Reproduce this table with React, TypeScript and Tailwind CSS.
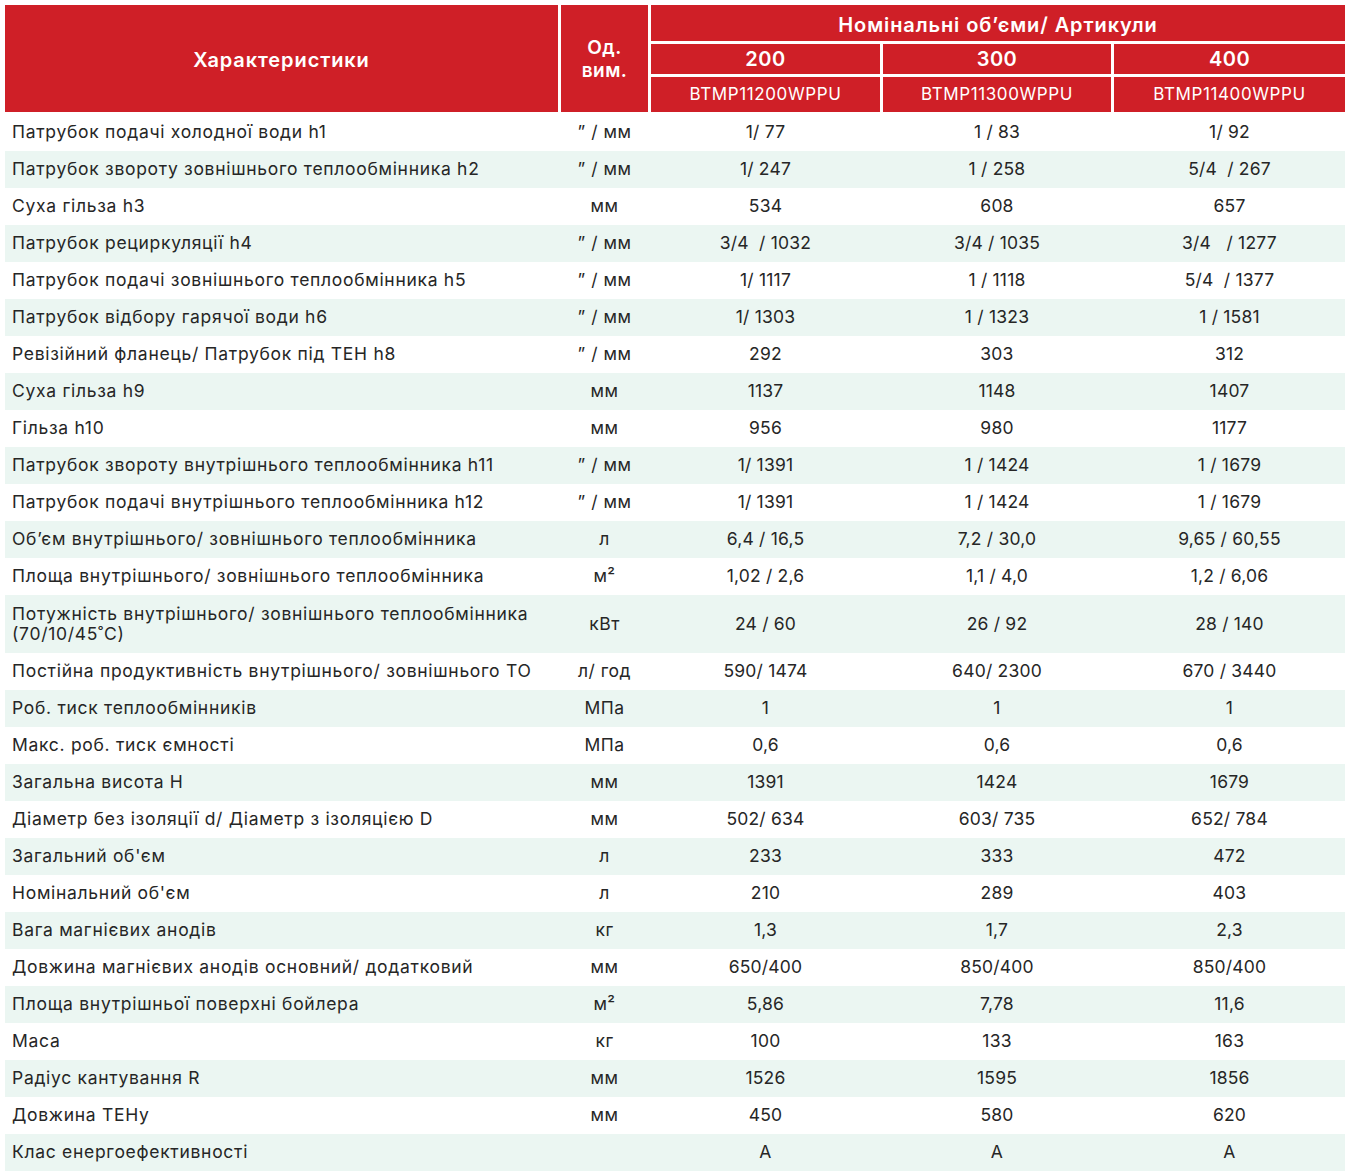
import React from "react";

type Row = { name: React.ReactNode; unit: string; v: [string, string, string]; tall?: boolean };

const rows: Row[] = [
  { name: "Патрубок подачі холодної води h1", unit: "\u201D / мм", v: ["1/ 77", "1 / 83", "1/ 92"] },
  { name: "Патрубок звороту зовнішнього теплообмінника h2", unit: "\u201D / мм", v: ["1/ 247", "1 / 258", "5/4  / 267"] },
  { name: "Суха гільза h3", unit: "мм", v: ["534", "608", "657"] },
  { name: "Патрубок рециркуляції h4", unit: "\u201D / мм", v: ["3/4  / 1032", "3/4 / 1035", "3/4   / 1277"] },
  { name: "Патрубок подачі зовнішнього теплообмінника h5", unit: "\u201D / мм", v: ["1/ 1117", "1 / 1118", "5/4  / 1377"] },
  { name: "Патрубок відбору гарячої води h6", unit: "\u201D / мм", v: ["1/ 1303", "1 / 1323", "1 / 1581"] },
  { name: "Ревізійний фланець/ Патрубок під ТЕН h8", unit: "\u201D / мм", v: ["292", "303", "312"] },
  { name: "Суха гільза h9", unit: "мм", v: ["1137", "1148", "1407"] },
  { name: "Гільза h10", unit: "мм", v: ["956", "980", "1177"] },
  { name: "Патрубок звороту внутрішнього теплообмінника h11", unit: "\u201D / мм", v: ["1/ 1391", "1 / 1424", "1 / 1679"] },
  { name: "Патрубок подачі внутрішнього теплообмінника h12", unit: "\u201D / мм", v: ["1/ 1391", "1 / 1424", "1 / 1679"] },
  { name: "Об\u2019єм внутрішнього/ зовнішнього теплообмінника", unit: "л", v: ["6,4 / 16,5", "7,2 / 30,0", "9,65 / 60,55"] },
  { name: "Площа внутрішнього/ зовнішнього теплообмінника", unit: "м²", v: ["1,02 / 2,6", "1,1 / 4,0", "1,2 / 6,06"] },
  {
    name: (
      <>
        Потужність внутрішнього/ зовнішнього теплообмінника
        <br />
        (70/10/45˚C)
      </>
    ),
    unit: "кВт",
    v: ["24 / 60", "26 / 92", "28 / 140"],
    tall: true,
  },
  { name: "Постійна продуктивність внутрішнього/ зовнішнього ТО", unit: "л/ год", v: ["590/ 1474", "640/ 2300", "670 / 3440"] },
  { name: "Роб. тиск теплообмінників", unit: "МПа", v: ["1", "1", "1"] },
  { name: "Макс. роб. тиск ємності", unit: "МПа", v: ["0,6", "0,6", "0,6"] },
  { name: "Загальна висота H", unit: "мм", v: ["1391", "1424", "1679"] },
  { name: "Діаметр без ізоляції d/ Діаметр з ізоляцією D", unit: "мм", v: ["502/ 634", "603/ 735", "652/ 784"] },
  { name: "Загальний об'єм", unit: "л", v: ["233", "333", "472"] },
  { name: "Номінальний об'єм", unit: "л", v: ["210", "289", "403"] },
  { name: "Вага магнієвих анодів", unit: "кг", v: ["1,3", "1,7", "2,3"] },
  { name: "Довжина магнієвих анодів основний/ додатковий", unit: "мм", v: ["650/400", "850/400", "850/400"] },
  { name: "Площа внутрішньої поверхні бойлера", unit: "м²", v: ["5,86", "7,78", "11,6"] },
  { name: "Маса", unit: "кг", v: ["100", "133", "163"] },
  { name: "Радіус кантування R", unit: "мм", v: ["1526", "1595", "1856"] },
  { name: "Довжина ТЕНу", unit: "мм", v: ["450", "580", "620"] },
  { name: "Клас енергоефективності", unit: "", v: ["A", "A", "A"] },
];

const cols = "grid grid-cols-[553px_87px_229px_228px_231px] gap-x-[3px]";

export default function App() {
  return (
    <div
      className="w-[1350px] min-h-[1174px] bg-white pt-[5px] pl-[5px] text-[#262626]"
      style={{ fontFamily: "Inter, 'Noto Sans', sans-serif" }}
    >
      {/* Header */}
      <div className={`${cols} grid-rows-[36px_30px_35px] gap-y-[3px] text-white`}>
        <div className="row-span-3 bg-[#cf1f27] flex items-center justify-center pt-[2px] text-[20px] tracking-[0.9px] font-semibold">
          Характеристики
        </div>
        <div className="row-span-3 bg-[#cf1f27] flex items-center justify-center text-center text-[19px] tracking-[0.5px] font-semibold leading-[23px]">
          Од.
          <br />
          вим.
        </div>
        <div className="col-span-3 bg-[#cf1f27] flex items-center justify-center pt-[3px] text-[20px] tracking-[0.9px] font-semibold">
          Номінальні об’єми/ Артикули
        </div>
        {["200", "300", "400"].map((t) => (
          <div key={t} className="bg-[#cf1f27] flex items-center justify-center text-[20px] tracking-[0.5px] font-semibold">
            {t}
          </div>
        ))}
        {["BTMP11200WPPU", "BTMP11300WPPU", "BTMP11400WPPU"].map((t) => (
          <div key={t} className="bg-[#cf1f27] flex items-center justify-center pt-[1px] text-[17px] tracking-[0.6px]">
            {t}
          </div>
        ))}
      </div>

      {/* Body */}
      <div className="mt-[2px] w-[1340px]">
        {rows.map((r, i) => (
          <div
            key={i}
            className={`${cols} ${r.tall ? "h-[58px]" : "h-[37px]"} ${i % 2 === 1 ? "bg-[#ebf6f2]" : "bg-white"} text-[17.5px]`}
          >
            <div className={`flex items-center pl-[7px] tracking-[0.7px] ${r.tall ? "leading-[20px]" : ""}`}>
              <span>{r.name}</span>
            </div>
            <div className="flex items-center justify-center whitespace-pre tracking-[0.5px]">{r.unit}</div>
            {r.v.map((x, j) => (
              <div key={j} className="flex items-center justify-center whitespace-pre tracking-[0.2px]">
                {x}
              </div>
            ))}
          </div>
        ))}
      </div>
    </div>
  );
}
